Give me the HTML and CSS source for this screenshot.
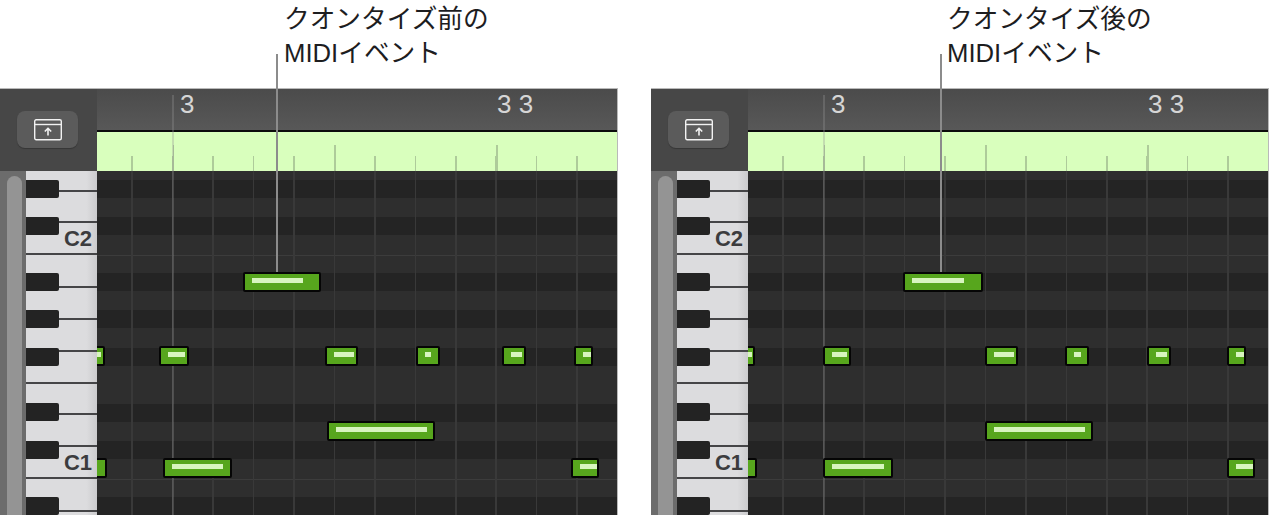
FILE: index.html
```html
<!DOCTYPE html>
<html lang="ja">
	<head>
		<meta charset="UTF-8" />
		<title>クオンタイズ前後のMIDIイベント</title>
		<link rel="stylesheet" href="styles.css">
	</head>
	<body>
		<div class="page">
			<figure class="figure">
				<figcaption class="caption caption-before">クオンタイズ前の<br>MIDIイベント</figcaption>
				<div class="editor">
					<div class="corner">
						<button class="corner-btn" type="button">
							<svg width="28" height="22" viewBox="0 0 28 22" fill="none" stroke="#f2f2f2" stroke-width="1.4">
								<rect x="0.7" y="0.7" width="26.6" height="20" rx="1.5" />
								<path d="M1 5.5H27" />
								<path d="M14 16.5V9.5M10.8 12.5L14 9.3L17.2 12.5" stroke-width="1.6" />
							</svg>
						</button>
					</div>
					<div class="ruler">
						<div class="bars">
							<span class="bar-num bar-first">3</span>
							<span class="bar-num bar-second">3 3</span>
						</div>
						<div class="strip"></div>
					</div>
					<div class="side">
						<div class="scrollbar"><div class="thumb"></div></div>
						<div class="keyboard">
							<div class="key k21"></div>
							<div class="key k31"></div>
							<div class="key k32">C2</div>
							<div class="key k33"></div>
							<div class="key k32"></div>
							<div class="key k32"></div>
							<div class="key k32"></div>
							<div class="key k31"></div>
							<div class="key k32"></div>
							<div class="key k32">C1</div>
							<div class="key k33"></div>
							<div class="key k3"></div>
							<div class="black b1"></div>
							<div class="black b2"></div>
							<div class="black b3"></div>
							<div class="black b4"></div>
							<div class="black b5"></div>
							<div class="black b6"></div>
							<div class="black b7"></div>
							<div class="black b8"></div>
						</div>
					</div>
					<div class="roll">
						<div class="note row-1" style="left:146px;width:78px"><i style="width:51px"></i></div>
						<div class="note row-2" style="left:-20px;width:28px"><i style="width:15px"></i></div>
						<div class="note row-2" style="left:62px;width:30px"><i style="width:17px"></i></div>
						<div class="note row-2" style="left:228px;width:33px"><i style="width:20px"></i></div>
						<div class="note row-2" style="left:319px;width:24px"><i style="width:6px"></i></div>
						<div class="note row-2" style="left:405px;width:24px"><i style="width:11px"></i></div>
						<div class="note row-2" style="left:477px;width:19px"><i style="width:8px"></i></div>
						<div class="note row-3" style="left:230px;width:108px"><i style="width:91px"></i></div>
						<div class="note row-4" style="left:-20px;width:30px"><i style="width:11px"></i></div>
						<div class="note row-4" style="left:66px;width:69px"><i style="width:51px"></i></div>
						<div class="note row-4" style="left:474px;width:28px"><i style="width:17px"></i></div>
					</div>
					<div class="beat-line"></div>
				</div>
				<div class="leader leader-before"></div>
			</figure>

			<figure class="figure">
				<figcaption class="caption caption-after">クオンタイズ後の<br>MIDIイベント</figcaption>
				<div class="editor">
					<div class="corner">
						<button class="corner-btn" type="button">
							<svg width="28" height="22" viewBox="0 0 28 22" fill="none" stroke="#f2f2f2" stroke-width="1.4">
								<rect x="0.7" y="0.7" width="26.6" height="20" rx="1.5" />
								<path d="M1 5.5H27" />
								<path d="M14 16.5V9.5M10.8 12.5L14 9.3L17.2 12.5" stroke-width="1.6" />
							</svg>
						</button>
					</div>
					<div class="ruler">
						<div class="bars">
							<span class="bar-num bar-first">3</span>
							<span class="bar-num bar-second">3 3</span>
						</div>
						<div class="strip"></div>
					</div>
					<div class="side">
						<div class="scrollbar"><div class="thumb"></div></div>
						<div class="keyboard">
							<div class="key k21"></div>
							<div class="key k31"></div>
							<div class="key k32">C2</div>
							<div class="key k33"></div>
							<div class="key k32"></div>
							<div class="key k32"></div>
							<div class="key k32"></div>
							<div class="key k31"></div>
							<div class="key k32"></div>
							<div class="key k32">C1</div>
							<div class="key k33"></div>
							<div class="key k3"></div>
							<div class="black b1"></div>
							<div class="black b2"></div>
							<div class="black b3"></div>
							<div class="black b4"></div>
							<div class="black b5"></div>
							<div class="black b6"></div>
							<div class="black b7"></div>
							<div class="black b8"></div>
						</div>
					</div>
					<div class="roll">
						<div class="note row-1" style="left:155px;width:80px"><i style="width:52px"></i></div>
						<div class="note row-2" style="left:-20px;width:27px"><i style="width:15px"></i></div>
						<div class="note row-2" style="left:75px;width:28px"><i style="width:15px"></i></div>
						<div class="note row-2" style="left:237px;width:33px"><i style="width:20px"></i></div>
						<div class="note row-2" style="left:317px;width:24px"><i style="width:7px"></i></div>
						<div class="note row-2" style="left:399px;width:24px"><i style="width:11px"></i></div>
						<div class="note row-2" style="left:479px;width:19px"><i style="width:8px"></i></div>
						<div class="note row-3" style="left:237px;width:108px"><i style="width:91px"></i></div>
						<div class="note row-4" style="left:-20px;width:29px"><i style="width:11px"></i></div>
						<div class="note row-4" style="left:75px;width:70px"><i style="width:52px"></i></div>
						<div class="note row-4" style="left:479px;width:28px"><i style="width:17px"></i></div>
					</div>
					<div class="beat-line"></div>
				</div>
				<div class="leader leader-after"></div>
			</figure>
		</div>
	</body>
</html>
```

FILE: styles.css
```css
body {
	margin: 0;
	background-color: #fff;
	font-family: "Liberation Sans", "Noto Sans CJK JP", sans-serif;
	color: #1d1d1f;
}
.page {
	display: flex;
	gap: 33px;
}
.figure {
	position: relative;
	width: 618px;
	margin: 0;
}
.caption {
	height: 88px;
	box-sizing: border-box;
	padding-top: 2px;
	font-size: 25.7px;
	line-height: 34px;
	white-space: nowrap;
}
.caption-before {
	padding-left: 284px;
}
.caption-after {
	padding-left: 296px;
}
.leader {
	position: absolute;
	z-index: 3;
	top: 54px;
	width: 2px;
	height: 218px;
	background-color: #8c8c8c;
}
.leader-before {
	left: 276px;
}
.leader-after {
	left: 289px;
}

.editor {
	position: relative;
	display: grid;
	grid-template-columns: 97px 1fr;
	grid-template-rows: 82px 344px;
	border-top: 1px solid #b9b9b9;
	overflow: hidden;
}
.corner {
	padding: 22px 19px 0 17px;
	background-color: #474747;
}
.corner-btn {
	display: flex;
	align-items: center;
	justify-content: center;
	width: 61px;
	height: 37px;
	padding: 0;
	border: none;
	border-radius: 8px;
	background-color: #5b5b5b;
	box-shadow: 0 1px 1px rgba(0, 0, 0, 0.25);
}

.ruler {
	display: flex;
	flex-direction: column;
	border-right: 1px solid #b9b9b9;
}
.bars {
	position: relative;
	height: 43px;
	background: linear-gradient(#4b4b4b, #585858);
	border-bottom: 2px solid #0c0c0c;
	box-sizing: border-box;
}
.bar-num {
	position: absolute;
	top: 0;
	font-size: 26px;
	line-height: 30px;
	color: #d6d6d6;
}
.bar-first {
	left: 83px;
}
.bar-second {
	left: 400px;
}
.strip {
	flex: 1;
	background-color: #d9ffbd;
	background-image:
		repeating-linear-gradient(90deg, transparent 77.2px, transparent 237.4px, #aecb9a 237.4px, #aecb9a 238.9px, transparent 239px),
		repeating-linear-gradient(90deg, transparent -4.45px, transparent 34.4px, #aecb9a 34.4px, #aecb9a 35.9px, transparent 36px);
	background-repeat: no-repeat;
	background-position: 0 100%, 0 100%;
	background-size: 100% 26px, 100% 15px;
}

.side {
	display: flex;
	background-color: #6c6c6c;
}
.scrollbar {
	width: 26px;
	box-sizing: border-box;
	padding: 5px 4px 0 7px;
}
.thumb {
	height: 100%;
	border-radius: 8px 8px 0 0;
	background-color: #949494;
}
.keyboard {
	position: relative;
	flex: 1;
	display: flex;
	flex-direction: column;
}
.key {
	box-sizing: border-box;
	display: flex;
	align-items: center;
	justify-content: flex-end;
	padding: 2px 5px 0 0;
	border-bottom: 2px solid #454547;
	background: linear-gradient(90deg, #dcdcde 85%, #cbcbcd);
	font-size: 22px;
	font-weight: bold;
	color: #3c3c3e;
}
.k3 {
	height: 3px;
	padding: 0;
	border-bottom: none;
}
.k21 {
	height: 21px;
}
.k31 {
	height: 31px;
}
.k32 {
	height: 32px;
}
.k33 {
	height: 33px;
}
.black {
	position: absolute;
	left: 0;
	width: 33px;
	height: 18px;
	border-radius: 0 2px 2px 0;
	background-color: #232323;
}
.b1 { top: 9px; }
.b2 { top: 46px; }
.b3 { top: 102px; }
.b4 { top: 139px; }
.b5 { top: 177px; }
.b6 { top: 232px; }
.b7 { top: 270px; }
.b8 { top: 326px; }

.roll {
	position: relative;
	overflow: hidden;
	border-right: 1px solid #b9b9b9;
	background-color: #2e2e2e;
	background-image:
		repeating-linear-gradient(90deg, transparent -4.45px, transparent 34.4px, #393939 34.4px, #393939 35.9px, transparent 36px),
		repeating-linear-gradient(180deg,
			transparent 0, transparent 9px,
			#242424 9px, #242424 27px,
			transparent 27px, transparent 46px,
			#242424 46px, #242424 64px,
			transparent 64px, transparent 84px,
			#3c3c3c 84px, #3c3c3c 85px,
			transparent 85px, transparent 102px,
			#242424 102px, #242424 120px,
			transparent 120px, transparent 139px,
			#242424 139px, #242424 157px,
			transparent 157px, transparent 177px,
			#242424 177px, #242424 195px,
			transparent 195px, transparent 224px);
}
.beat-line {
	position: absolute;
	z-index: 1;
	top: 6px;
	bottom: 0;
	left: 172px;
	width: 2px;
	background-color: rgba(150, 150, 150, 0.32);
}
.note {
	position: absolute;
	z-index: 2;
	box-sizing: border-box;
	height: 20px;
	padding: 4px 0 0 7px;
	border: 2px solid #050505;
	border-radius: 2px;
	background-color: #57a61d;
}
.note i {
	display: block;
	height: 5px;
	background-color: #d8f5bf;
}
.row-1 { top: 101px; }
.row-2 { top: 175px; }
.row-3 { top: 250px; }
.row-4 { top: 287px; }
```
